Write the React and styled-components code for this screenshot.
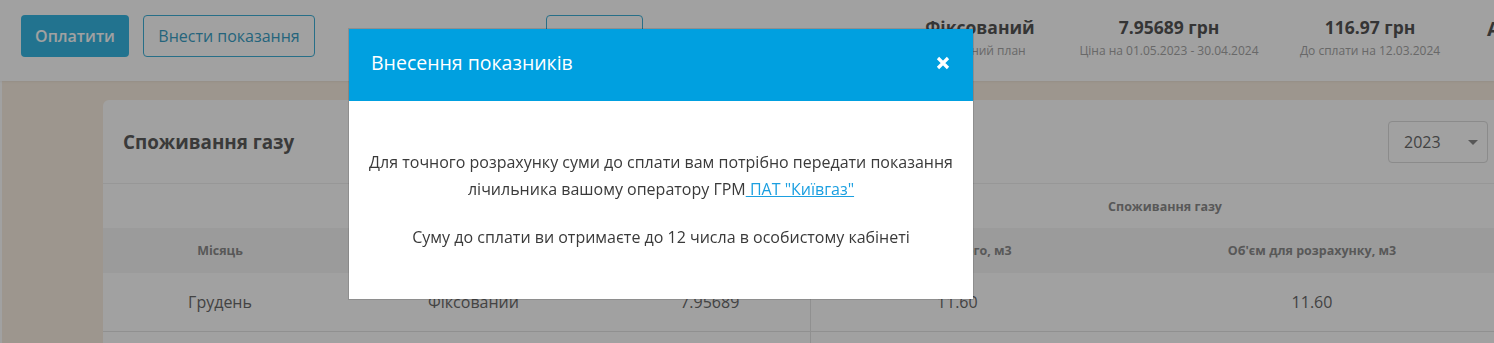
import React from "react";
import styled, { createGlobalStyle } from "styled-components";

const GlobalStyle = createGlobalStyle`
  html, body {
    margin: 0;
    padding: 0;
    overflow: hidden;
    font-family: "Open Sans", "Noto Sans", sans-serif;
    color: #333;
  }
  * { box-sizing: border-box; }
`;

const stats = [
  { value: "Фіксований", label: "Тарифний план", width: 160 },
  { value: "7.95689 грн", label: "Ціна на 01.05.2023 - 30.04.2024", width: 218 },
  { value: "116.97 грн", label: "До сплати на 12.03.2024", width: 184 },
];

const App = () => {
  return (
    <>
      <GlobalStyle />
      <Page>
        <Header>
          <PrimaryButton>Оплатити</PrimaryButton>
          <OutlineButton $width={172}>Внести показання</OutlineButton>
          <OutlineButton $width={97} $offset={231}>Історія</OutlineButton>
          <Stats>
            {stats.map((s) => (
              <Stat key={s.value} $width={s.width}>
                <StatValue>{s.value}</StatValue>
                <StatLabel>{s.label}</StatLabel>
              </Stat>
            ))}
            <CutOff>Адреса</CutOff>
          </Stats>
        </Header>

        <Main>
          <Card>
            <CardHead>
              <CardTitle>Споживання газу</CardTitle>
              <Select>
                <span>2023</span>
                <Caret />
              </Select>
            </CardHead>

            <Table>
              <colgroup>
                <col style={{ width: 234 }} />
                <col style={{ width: 273 }} />
                <col style={{ width: 200 }} />
                <col style={{ width: 294 }} />
                <col style={{ width: 416 }} />
              </colgroup>
              <thead>
                <GroupRow>
                  <th colSpan={3} />
                  <th colSpan={2}>Споживання газу</th>
                </GroupRow>
                <HeadRow>
                  <th>Місяць</th>
                  <th>Тариф</th>
                  <th>Ціна</th>
                  <th>Об'єм всього, м3</th>
                  <th>Об'єм для розрахунку, м3</th>
                </HeadRow>
              </thead>
              <tbody>
                <DataRow>
                  <td>Грудень</td>
                  <td>Фіксований</td>
                  <td>7.95689</td>
                  <SplitCell>11.60</SplitCell>
                  <td>11.60</td>
                </DataRow>
                <DataRow>
                  <td colSpan={3} />
                  <SplitCell colSpan={2} />
                </DataRow>
              </tbody>
            </Table>
          </Card>
        </Main>
      </Page>

      <Overlay />

      <Modal>
        <ModalHead>
          <ModalTitle>Внесення показників</ModalTitle>
          <CloseButton aria-label="close">
            <svg width="14" height="14" viewBox="0 0 14 14">
              <path d="M2 2 L12 12 M12 2 L2 12" stroke="#fff" strokeWidth="3.2" strokeLinecap="butt" />
            </svg>
          </CloseButton>
        </ModalHead>
        <ModalBody>
          <ModalText>
            Для точного розрахунку суми до сплати вам потрібно передати показання лічильника вашому
            оператору ГРМ<ModalLink href="#"> ПАТ "Київгаз"</ModalLink>
          </ModalText>
          <ModalText>Суму до сплати ви отримаєте до 12 числа в особистому кабінеті</ModalText>
        </ModalBody>
      </Modal>
    </>
  );
};

export default App;

const Page = styled.div`
  width: 1494px;
  height: 343px;
  display: flex;
  flex-direction: column;
  background: #fff;
  overflow: hidden;
`;

const Header = styled.header`
  height: 81px;
  flex-shrink: 0;
  display: flex;
  align-items: center;
  padding: 0 0 9px 21px;
  background: #fff;
  box-shadow: 0 1px 2px rgba(0, 0, 0, 0.06);
  position: relative;
  z-index: 1;
`;

const PrimaryButton = styled.button`
  flex-shrink: 0;
  width: 108px;
  height: 42px;
  padding: 0;
  border: none;
  border-radius: 4px;
  background: #37b7e2;
  color: #fff;
  font-family: inherit;
  font-size: 16px;
  font-weight: 600;
`;

const OutlineButton = styled.button`
  flex-shrink: 0;
  height: 42px;
  width: ${(p) => p.$width}px;
  margin-left: ${(p) => (p.$offset ? `${p.$offset}px` : "14px")};
  padding: 0;
  border: 1px solid #3fb0d8;
  border-radius: 4px;
  background: #fff;
  color: #3a9fc6;
  font-family: inherit;
  font-size: 16px;
  font-weight: 500;
  white-space: nowrap;
  overflow: hidden;
`;

const Stats = styled.div`
  flex-shrink: 0;
  display: flex;
  align-items: center;
  margin-left: 257px;
  padding-top: 2px;
`;

const Stat = styled.div`
  flex-shrink: 0;
  width: ${(p) => p.$width}px;
  display: flex;
  flex-direction: column;
  align-items: center;
  gap: 3px;
`;

const StatValue = styled.div`
  font-size: 17.5px;
  font-weight: 700;
  color: #555;
  white-space: nowrap;
`;

const StatLabel = styled.div`
  font-size: 12px;
  color: #a5a5a5;
  white-space: nowrap;
`;

const CutOff = styled.div`
  flex-shrink: 0;
  margin-left: 25px;
  margin-top: -18px;
  font-size: 20px;
  font-weight: 700;
  color: #555;
  white-space: nowrap;
`;

const Main = styled.main`
  flex: 1;
  background: #f9eee1;
  border-left: 2px solid #fff;
  padding: 19px 0 0 101px;
  overflow: hidden;
`;

const Card = styled.section`
  width: 1417px;
  background: #fff;
  border-radius: 6px 6px 0 0;
`;

const CardHead = styled.div`
  height: 84px;
  display: flex;
  align-items: center;
  justify-content: space-between;
  padding: 0 32px 0 20px;
  border-bottom: 1px solid #efefef;
`;

const CardTitle = styled.h2`
  margin: 0;
  font-size: 18.8px;
  font-weight: 700;
  color: #5c5c5c;
`;

const Select = styled.div`
  width: 100px;
  height: 42px;
  display: flex;
  align-items: center;
  justify-content: space-between;
  padding: 0 9px 0 15px;
  border: 1px solid #dcdcdc;
  border-radius: 4px;
  font-size: 16px;
  color: #6a6a6a;
`;

const Caret = styled.span`
  width: 0;
  height: 0;
  border-left: 5px solid transparent;
  border-right: 5px solid transparent;
  border-top: 5px solid #8a8a8a;
  margin-top: 2px;
`;

const Table = styled.table`
  width: 1417px;
  border-collapse: collapse;
  table-layout: fixed;

  th {
    font-size: 12.5px;
    font-weight: 700;
    color: #8c8c8c;
    text-align: center;
    padding: 0;
    white-space: nowrap;
  }

  td {
    font-size: 16px;
    color: #6a6a6a;
    text-align: center;
    padding: 0;
  }
`;

const GroupRow = styled.tr`
  height: 44px;
  background: #fff;
`;

const HeadRow = styled.tr`
  height: 45px;
  background: #f6f6f6;
`;

const DataRow = styled.tr`
  height: 58px;
  border-bottom: 1px solid #e4e4e4;
`;

const SplitCell = styled.td`
  border-left: 1px solid #e4e4e4;
`;

const Overlay = styled.div`
  position: fixed;
  inset: 0;
  z-index: 5;
  background: rgba(0, 0, 0, 0.37);
`;

const Modal = styled.div`
  position: fixed;
  z-index: 6;
  left: 349px;
  top: 29px;
  width: 624px;
  background: #fff;
  box-shadow: 0 0 0 1px rgba(0, 0, 0, 0.12);
`;

const ModalHead = styled.div`
  height: 72px;
  display: flex;
  align-items: center;
  justify-content: space-between;
  padding: 0 23px 5px 22px;
  background: #00a0e0;
`;

const ModalTitle = styled.h3`
  margin: 0;
  font-size: 19.5px;
  font-weight: 500;
  color: #fff;
`;

const CloseButton = styled.button`
  display: flex;
  padding: 0;
  border: none;
  background: transparent;
`;

const ModalBody = styled.div`
  height: 198px;
  display: flex;
  flex-direction: column;
  align-items: center;
  gap: 21px;
  padding: 48px 18px 0;
`;

const ModalText = styled.p`
  margin: 0;
  font-size: 16px;
  line-height: 27px;
  color: #3a3a3a;
  text-align: center;
`;

const ModalLink = styled.a`
  color: #1b9fe0;
  text-decoration: underline;
`;
